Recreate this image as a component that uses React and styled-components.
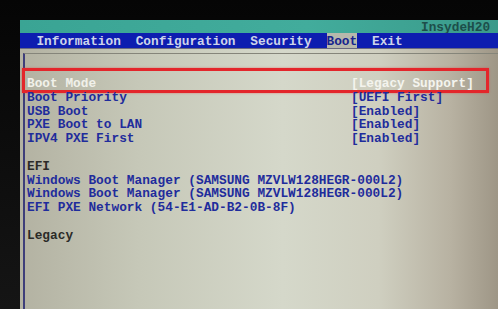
import styled, { createGlobalStyle } from "styled-components";

const GlobalStyle = createGlobalStyle`
  html, body {
    margin: 0;
    padding: 0;
    background: #070707;
    overflow: hidden;
  }
`;

const tabs = ["Information", "Configuration", "Security", "Boot", "Exit"];

const rows = [
  { label: "Boot Mode", value: "[Legacy Support]", selected: true },
  { label: "Boot Priority", value: "[UEFI First]" },
  { label: "USB Boot", value: "[Enabled]" },
  { label: "PXE Boot to LAN", value: "[Enabled]" },
  { label: "IPV4 PXE First", value: "[Enabled]" },
  { blank: true },
  { label: "EFI", header: true },
  { label: "Windows Boot Manager (SAMSUNG MZVLW128HEGR-000L2)" },
  { label: "Windows Boot Manager (SAMSUNG MZVLW128HEGR-000L2)" },
  { label: "EFI PXE Network (54-E1-AD-B2-0B-8F)" },
  { blank: true },
  { label: "Legacy", header: true },
];

const App = () => {
  return (
    <>
      <GlobalStyle />
      <Bezel>
        <Screen>
          <TitleBar>
            <Title>InsydeH20</Title>
          </TitleBar>
          <TabBar>
            {tabs.map((t) => (
              <Tab key={t} active={t === "Boot"}>
                {t}
              </Tab>
            ))}
          </TabBar>
          <Panel>
            <Box>
              {rows.map((r, i) =>
                r.blank ? (
                  <Blank key={i} />
                ) : (
                  <Row key={i} selected={r.selected}>
                    <Label header={r.header} selected={r.selected}>
                      {r.label}
                    </Label>
                    {r.value && <Value selected={r.selected}>{r.value}</Value>}
                  </Row>
                )
              )}
            </Box>
          </Panel>
        </Screen>
      </Bezel>
    </>
  );
};

export default App;

const mono = `"Liberation Mono", "DejaVu Sans Mono", monospace`;

const Bezel = styled.div`
  width: 498px;
  height: 309px;
  box-sizing: border-box;
  padding: 20px 0 0 20px;
  background: linear-gradient(180deg, #050505 0%, #151515 100%);
  overflow: hidden;
`;

const Screen = styled.div`
  display: flex;
  flex-direction: column;
  height: 100%;
  font-family: ${mono};
  font-weight: bold;
  font-size: 12.8px;
`;

const TitleBar = styled.div`
  height: 13px;
  display: flex;
  align-items: flex-end;
  padding-left: 401px;
  background: linear-gradient(90deg, #3aa494 0%, #42ac9c 60%, #3a9a8a 100%);
  white-space: nowrap;
`;

const Title = styled.span`
  color: #1d4e4a;
  line-height: 13px;
  margin-bottom: -1px;
`;

const TabBar = styled.div`
  height: 15px;
  display: flex;
  align-items: stretch;
  padding-left: 9px;
  background: #0d1db0;
  border-bottom: 1px solid #6a6a80;
  white-space: nowrap;
`;

const Tab = styled.span`
  margin: 0 7.4px;
  padding-top: 2px;
  display: flex;
  align-items: center;
  color: ${(p) => (p.active ? "#17248e" : "#cdd4ea")};
  background: ${(p) => (p.active ? "#b7b8ac" : "transparent")};
`;

const Panel = styled.div`
  flex: 1;
  padding: 4px 0 0 3px;
  background: linear-gradient(
    90deg,
    #b3b2a2 0%,
    #c6c8b8 25%,
    #d5d8ca 55%,
    #cfcfc0 75%,
    #b8b2a2 90%,
    #9e9686 100%
  );
`;

const Box = styled.div`
  height: 100%;
  box-sizing: border-box;
  padding: 23px 0 0 2px;
  border-top: 1.5px solid #85857a;
  border-left: 2px solid #3e3e7a;
`;

const Row = styled.div`
  position: relative;
  display: grid;
  grid-template-columns: 324px 1fr;
  line-height: 13.8px;
  height: 13.8px;
  white-space: nowrap;

  ${(p) =>
    p.selected &&
    `
    &::after {
      content: "";
      position: absolute;
      left: -5px;
      right: 9px;
      top: -9px;
      bottom: -2px;
      border: 3px solid #e3262b;
      box-shadow: 0 0 2px rgba(230, 40, 40, 0.5);
    }
  `}
`;

const Blank = styled.div`
  height: 13.8px;
`;

const Label = styled.span`
  color: ${(p) =>
    p.selected ? "#f1f1ea" : p.header ? "#2b2b28" : "#1f2c9c"};
`;

const Value = styled.span`
  color: ${(p) => (p.selected ? "#f4f4ee" : "#1f2c9c")};
`;
